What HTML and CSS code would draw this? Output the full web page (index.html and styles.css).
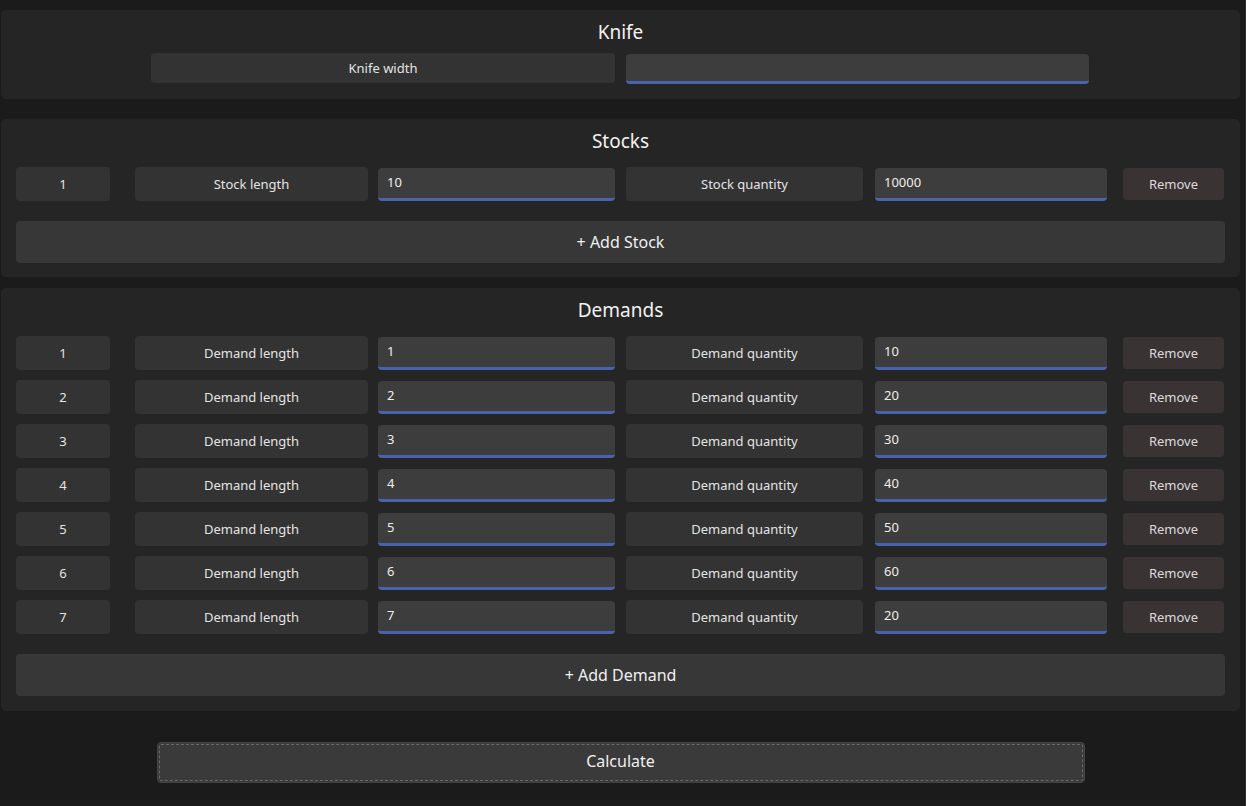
FILE: index.html
```html
<!DOCTYPE html>
<html>
<head>
<meta charset="utf-8">
<link rel="stylesheet" href="styles.css">
</head>
<body>
<div class="app">
  <section class="panel knife">
    <h2 class="title">Knife</h2>
    <div class="knife-row">
      <div class="box knife-label">Knife width</div>
      <div class="input knife-input"></div>
    </div>
  </section>

  <section class="panel stocks">
    <h2 class="title">Stocks</h2>
    <div class="rows">
      <div class="row">
        <div class="box idx">1</div>
        <div class="box lbl">Stock length</div>
        <div class="input inp">10</div>
        <div class="box lbl2">Stock quantity</div>
        <div class="input inp2">10000</div>
        <div class="box remove">Remove</div>
      </div>
    </div>
    <div class="add">+ Add Stock</div>
  </section>

  <section class="panel demands">
    <h2 class="title">Demands</h2>
    <div class="rows">
      <div class="row">
        <div class="box idx">1</div>
        <div class="box lbl">Demand length</div>
        <div class="input inp">1</div>
        <div class="box lbl2">Demand quantity</div>
        <div class="input inp2">10</div>
        <div class="box remove">Remove</div>
      </div>
      <div class="row">
        <div class="box idx">2</div>
        <div class="box lbl">Demand length</div>
        <div class="input inp">2</div>
        <div class="box lbl2">Demand quantity</div>
        <div class="input inp2">20</div>
        <div class="box remove">Remove</div>
      </div>
      <div class="row">
        <div class="box idx">3</div>
        <div class="box lbl">Demand length</div>
        <div class="input inp">3</div>
        <div class="box lbl2">Demand quantity</div>
        <div class="input inp2">30</div>
        <div class="box remove">Remove</div>
      </div>
      <div class="row">
        <div class="box idx">4</div>
        <div class="box lbl">Demand length</div>
        <div class="input inp">4</div>
        <div class="box lbl2">Demand quantity</div>
        <div class="input inp2">40</div>
        <div class="box remove">Remove</div>
      </div>
      <div class="row">
        <div class="box idx">5</div>
        <div class="box lbl">Demand length</div>
        <div class="input inp">5</div>
        <div class="box lbl2">Demand quantity</div>
        <div class="input inp2">50</div>
        <div class="box remove">Remove</div>
      </div>
      <div class="row">
        <div class="box idx">6</div>
        <div class="box lbl">Demand length</div>
        <div class="input inp">6</div>
        <div class="box lbl2">Demand quantity</div>
        <div class="input inp2">60</div>
        <div class="box remove">Remove</div>
      </div>
      <div class="row">
        <div class="box idx">7</div>
        <div class="box lbl">Demand length</div>
        <div class="input inp">7</div>
        <div class="box lbl2">Demand quantity</div>
        <div class="input inp2">20</div>
        <div class="box remove">Remove</div>
      </div>
    </div>
    <div class="add">+ Add Demand</div>
  </section>

  <div class="calc-wrap">
    <div class="calc"><span>Calculate</span></div>
  </div>
</div>
</body>
</html>
```

FILE: styles.css
```css
html, body {
  margin: 0;
  padding: 0;
  background: #1b1b1b;
  height: 100%;
}
body {
  font-family: "Noto Sans", "Open Sans", sans-serif;
  color: #e2e2e2;
  font-size: 13px;
}
.app {
  width: 1246px;
  height: 806px;
  box-sizing: border-box;
  border-right: 1px solid #2c2c2c;
  padding: 10px 5px 0 1px;
  display: flex;
  flex-direction: column;
}
.panel {
  background: #252525;
  border-radius: 5px;
  padding: 10px 15px 14px 15px;
  display: flex;
  flex-direction: column;
}
.title {
  margin: 0;
  font-weight: normal;
  font-size: 19px;
  line-height: 24px;
  text-align: center;
  color: #f2f2f2;
}
.knife {
  padding-bottom: 15px;
}
.knife .title {
  margin-bottom: 9px;
}
.knife-row {
  display: flex;
  justify-content: center;
  align-items: flex-start;
  gap: 11px;
  margin-right: 1px;
}
.box {
  background: #333333;
  border-radius: 4px;
  display: flex;
  align-items: center;
  justify-content: center;
  box-sizing: border-box;
  color: #e4e4e4;
}
.input {
  background: #3d3d3d;
  border-radius: 4px;
  border-bottom: 3px solid #4a63ad;
  box-sizing: border-box;
  display: flex;
  align-items: center;
  padding: 0 0 0 9px;
  color: #ededed;
}
.knife-label {
  width: 464px;
  height: 30px;
}
.knife-input {
  width: 463px;
  height: 30px;
  margin-top: 1px;
}
.stocks {
  margin-top: 20px;
}
.demands {
  margin-top: 11px;
  padding-bottom: 15px;
}
.stocks .title,
.demands .title {
  margin-bottom: 14px;
}
.rows {
  display: flex;
  flex-direction: column;
  gap: 10px;
}
.row {
  display: flex;
  align-items: flex-start;
  height: 34px;
}
.row .box {
  height: 34px;
}
.row .input {
  height: 33px;
  margin-top: 1px;
  padding-bottom: 2px;
}
.idx { width: 94px; }
.lbl { width: 233px; margin-left: 25px; }
.inp { width: 237px; margin-left: 10px; }
.lbl2 { width: 237px; margin-left: 11px; }
.inp2 { width: 232px; margin-left: 12px; }
.row .remove {
  width: 101px;
  margin-left: 16px;
  height: 32px;
  margin-top: 1px;
  background: #3a3333;
  color: #dadada;
}
.add {
  margin-top: 20px;
  height: 42px;
  background: #373737;
  border-radius: 4px;
  display: flex;
  align-items: center;
  justify-content: center;
  font-size: 16px;
  color: #f0f0f0;
}
.calc-wrap {
  display: flex;
  justify-content: center;
  margin-top: 31px;
}
.calc {
  width: 928px;
  height: 41px;
  box-sizing: border-box;
  background: #3a3a3a;
  border: 1px solid #454545;
  border-radius: 4px;
  padding: 1px;
  display: flex;
}
.calc span {
  flex: 1;
  border: 1px dashed #6a6a6a;
  border-radius: 2px;
  display: flex;
  align-items: center;
  justify-content: center;
  font-size: 16px;
  color: #f0f0f0;
  padding-bottom: 3px;
}
```
